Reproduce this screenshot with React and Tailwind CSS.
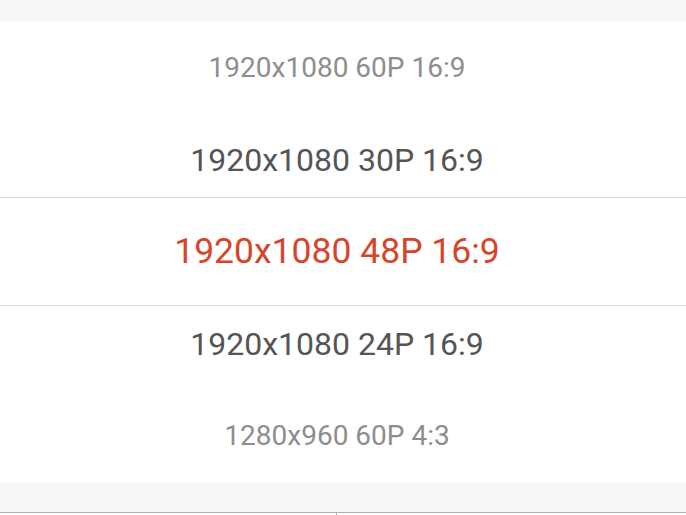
const rows = [
  { label: "1920x1080 60P 16:9", cls: "text-[28px] text-[#8e8e8e]" },
  { label: "1920x1080 30P 16:9", cls: "text-[32px] text-[#555555]" },
  { label: "1920x1080 48P 16:9", cls: "text-[35.5px] text-[#d6452b]" },
  { label: "1920x1080 24P 16:9", cls: "text-[32px] text-[#555555]" },
  { label: "1280x960 60P 4:3", cls: "text-[28px] text-[#8e8e8e]" },
];

export default function App() {
  return (
    <div className="w-[686px] h-[515px] overflow-hidden bg-white flex flex-col" style={{ fontFamily: "Roboto, 'Noto Sans', sans-serif" }}>
      <div className="h-[22px] bg-[#f7f7f7] shrink-0" />

      {/* wheel picker */}
      <div className="relative h-[460px] shrink-0 flex flex-col">
        {rows.map((r) => (
          <div key={r.label} className="h-[92px] flex items-center justify-center pr-[12px]">
            <span className={`leading-none ${r.cls}`}>{r.label}</span>
          </div>
        ))}
        <div className="absolute left-0 right-0 top-[175px] h-[109px] border-y border-[#d9d9d9] pointer-events-none" />
      </div>

      <div className="h-[31px] bg-[#f7f7f7] shrink-0 border-b border-[#b3b3b3]" />
      <div className="flex-1 grid grid-cols-2">
        <div className="border-r border-[#b3b3b3] w-[337px]" />
        <div />
      </div>
    </div>
  );
}
